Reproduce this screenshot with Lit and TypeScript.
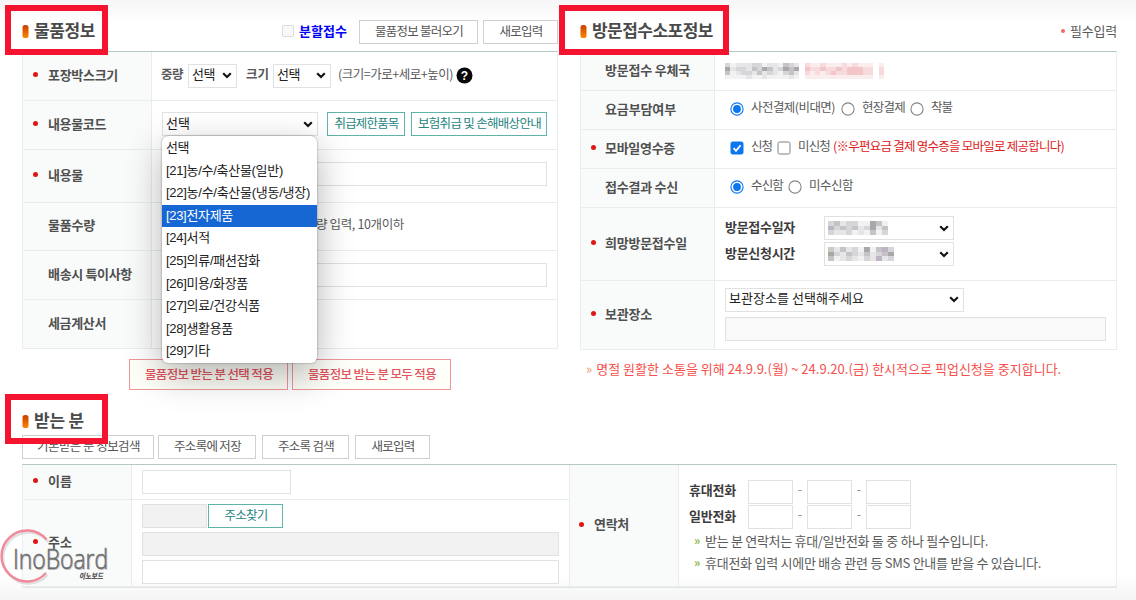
import { LitElement, html, css, svg } from "lit";
import { customElement, property } from "lit/decorators.js";

/** One line of text whose tracking is adjusted so that it fills `w` pixels. */
@customElement("fit-text")
class FitText extends LitElement {
  @property() text = "";
  @property({ type: Number }) w = 0;
  static styles = css`
    :host { display: block; flex: none; white-space: pre; }
    span { display: inline-block; }
  `;
  render() { return html`<span>${this.text}</span>`; }
  updated() {
    const s = this.renderRoot.querySelector("span") as HTMLElement;
    s.style.letterSpacing = "0px";
    const natural = s.getBoundingClientRect().width;
    s.style.letterSpacing = `${(this.w + 1 - natural) / this.text.length}px`;
    this.style.width = `${this.w}px`;
  }
}

const t = (text: string, w: number, cls = "") =>
  html`<fit-text class=${cls} .text=${text} .w=${w}></fit-text>`;

const chevron = html`<svg class="chev" width="10" height="7" viewBox="0 0 10 7"><path d="M1.2 1.2 L5 5 L8.8 1.2" fill="none" stroke="#111" stroke-width="2.1"/></svg>`;
const radio = (on: boolean) => html`<svg class="mark" width="14" height="14" viewBox="0 0 14 14">
  <circle cx="7" cy="7" r="6.1" fill="#fff" stroke=${on ? "#0b76ef" : "#858585"} stroke-width="1.1"/>
  ${on ? svg`<circle cx="7" cy="7" r="3.9" fill="#0b76ef"/>` : ""}</svg>`;
const check = (on: boolean) => html`<svg class="mark" width="14" height="14" viewBox="0 0 14 14">
  <rect x="1" y="1" width="12" height="12" rx="1.5" fill=${on ? "#0b76ef" : "#fff"} stroke=${on ? "#0b76ef" : "#808080"}/>
  ${on ? svg`<path d="M3.6 7.2 L6 9.8 L10.6 4.2" fill="none" stroke="#fff" stroke-width="1.8"/>` : ""}</svg>`;
const bullet = html`<svg class="bullet" width="7" height="13" viewBox="0 0 7 13">
  <defs><linearGradient id="o" x1="0" y1="0" x2="0" y2="1"><stop offset="0" stop-color="#c63f00"/><stop offset="1" stop-color="#ff8400"/></linearGradient></defs>
  <rect x="0.5" y="0" width="6" height="13" rx="2.6" fill="url(#o)"/></svg>`;

/** Pixelated strip: each string is a row of palette keys. */
const palette: Record<string, string> = {
  a: "#a9a7a8", b: "#c5c3c5", c: "#d6d5da", d: "#e6e5e8", e: "#f3f2f3",
  p: "#f2c5c8", q: "#f7dadc", r: "#fbeced", v: "#bdb3c4", g: "#c9ccc0",
};
const mosaic = (rows: string[], cw: number, ch: number) => html`<svg class="mosaic" width=${rows[0].length * cw} height=${rows.length * ch} shape-rendering="crispEdges">
  ${rows.map((r, y) => [...r].map((k, x) => palette[k]
    ? svg`<rect x=${x * cw} y=${y * ch} width=${cw} height=${ch} fill=${palette[k]}/>` : ""))}</svg>`;

const label = (text: string, w: number, req = false) =>
  html`<div class="th"><i class=${req ? "dot" : "dot off"}></i>${t(text, w)}</div>`;

const options: [string, number][] = [
  ["선택", 22], ["[21]농/수/축산물(일반)", 116], ["[22]농/수/축산물(냉동/냉장)", 143],
  ["[23]전자제품", 66], ["[24]서적", 43], ["[25]의류/패션잡화", 93], ["[26]미용/화장품", 81],
  ["[27]의료/건강식품", 93], ["[28]생활용품", 66], ["[29]기타", 43],
];

@customElement("app-root")
class AppRoot extends LitElement {
  static styles = css`
    :host {
      display: block; position: relative; width: 1136px; height: 600px; overflow: hidden;
      box-sizing: border-box; color: #5a5a5a; font: 12.5px/16px "Noto Sans CJK KR", sans-serif;
      background: linear-gradient(#f6f6f6, #fff 24px, #fff 574px, #f5f5f5);
    }
    * { box-sizing: border-box; }
    svg { display: block; flex: none; }
    .top { display: grid; grid-template-columns: 536px 537px; column-gap: 22px; padding-left: 22px; height: 394px; }
    .head { display: flex; align-items: center; height: 51px; padding-top: 12px; }
    .title { font-size: 17px; line-height: 22px; font-weight: 700; color: #4a4a4a; margin-left: 5px; margin-top: -3px; }
    .grow { flex: 1; }
    .table { border-top: 1.5px solid #b4c8c4; border-right: 1px solid #ebeeee; border-left: 1px solid #ebeeee; }
    .row { display: flex; border-bottom: 1px solid #e9ecec; }
    .th { flex: none; display: flex; align-items: center; background: #f9fbfb; border-right: 1px solid #e9ecec;
      font-weight: 700; font-size: 13px; color: #505050; padding: 0 0 3px 10px; }
    .left .th { width: 129px; }
    .right .th { width: 134px; }
    .right .th .dot { margin-right: 9px; }
    .td { flex: 1; display: flex; align-items: center; padding-left: 10px; }
    .right .td { padding-left: 10px; }
    .right .td.c { padding-left: 9px; }
    .h50 { height: 49px; } .h53 { height: 53px; } .h48 { height: 48px; }
    .h39 { height: 39px; } .h73 { height: 73px; } .h69 { height: 69px; }
    .h39 .td.c { padding-bottom: 3px; }
    .td.p2 { padding-bottom: 2px; }
    .td.p1 { padding-left: 9px; padding-bottom: 1px; }
    .h53 .td { padding-bottom: 5px; }
    .dot { width: 5px; height: 5px; border-radius: 50%; background: #e01616; margin: 0 10px 0 0; flex: none; }
    .dot.off { visibility: hidden; }
    .box { display: flex; align-items: center; height: 24px; border: 1px solid #e0e2e2; background: #fff; flex: none; }
    .sel { color: #222; font-size: 13px; padding-left: 3px; justify-content: space-between; }
    .sel fit-text { margin-bottom: 3px; }
    .chev { margin-right: 4px; }
    .btn { justify-content: center; border-color: #cfcfcf; font-size: 12.5px; color: #555; padding-bottom: 2px; }
    .teal { border: 1.5px solid #5fb3a8; color: #26857f; }
    .gray { background: #f2f2f2; } .pale { background: #f9f9f9; }
    .w49 { width: 49px; } .w58 { width: 58px; } .w156 { width: 156px; } .w77 { width: 78px; } .w136 { width: 136px; }
    .w385 { width: 385px; } .w120 { width: 119px; } .w75 { width: 75px; } .w130 { width: 130px; } .w239 { width: 239px; }
    .w381 { width: 381px; } .w133 { width: 132px; } .w98 { width: 98px; } .w88 { width: 87px; } .w149 { width: 149px; }
    .w65 { width: 65px; } .w417 { width: 417px; } .w45 { width: 45px; }
    .m2 { margin-left: 1px; } .m4 { margin-left: 4px; } .m5 { margin-left: 5px; } .m6 { margin-left: 6px; }
    .m7 { margin-left: 7px; } .m9 { margin-left: 9px; } .m10 { margin-left: 10px; } .m13 { margin-left: 13px; } .m30 { margin-left: 30px; }
    .b { font-weight: 700; } .dark { font-weight: 700; color: #3c3c3c; font-size: 13px; }
    .up { margin-bottom: 3px; }
    .tel .t0 { margin-bottom: 5px; } .tel .t1 { margin-bottom: 2px; }
    .blue { color: #0000f5; font-weight: 700; font-size: 13px; margin-bottom: 2px; }
    .red { color: #dc2222; }
    .minor { width: 12px; height: 12px; border: 1px solid #dcdcdc; border-radius: 2px; background: #f8f8f8; margin-right: 5px; margin-bottom: 1px; }
    .help { margin-left: 4px; }
    .hlp { font: 700 12px "Liberation Sans", sans-serif; }
    .qty { margin-left: 154px; margin-bottom: 5px; }
    .stack { flex-direction: column; align-items: flex-start; justify-content: center; }
    .line { display: flex; align-items: center; }
    .dates { gap: 2px; padding-bottom: 6px; }
    .dates .line { height: 24px; }
    .place { gap: 5px; padding-bottom: 2px; }
    .apply { display: flex; gap: 4px; padding: 10px 0 0 107px; }
    .apply .box { width: 159px; height: 31px; border: 1.5px solid #f0959a; background: #fffffa; color: #e25560; font-weight: 500; }
    .notice { display: flex; align-items: center; padding: 11px 0 0 6px; color: #f5504c; font-size: 13px; }
    .q { color: #e8a070; margin-right: 4px; font-size: 13px; }
    .reqd { font-size: 13px; margin: 0 1px 2px 0; }
    .reqdot { width: 4px; height: 4px; border-radius: 50%; background: #f26a60; margin-right: 5px; margin-bottom: 1px; }
    .recv { padding-left: 22px; width: 1117px; }
    .rhead { display: flex; align-items: center; height: 41px; padding-top: 13px; }
    .bar { display: flex; height: 29px; }
    .rt { display: grid; grid-template-columns: 109px 438px 109px 1fr; grid-template-rows: 35px 87px; height: 124px; border-bottom: 1px solid #e3e6e6; }
    .rt .th { border-bottom: 1px solid #e9ecec; }
    .rt .th.span { padding-left: 9px; }
    .rt .td { border-bottom: 1px solid #e9ecec; border-right: 1px solid #e9ecec; }
    .rt .td.tel { border-right: 0; }
    .span { grid-row: span 2; }
    .addr { gap: 4px; padding-top: 1px; }
    .tel .line { height: 25px; }
    .tel .dash { width: 14px; text-align: center; color: #888; line-height: 16px; margin-top: -7px; }
    .tel { padding-top: 2px; }
    .hint { display: flex; align-items: center; height: 22px; padding-left: 5px; font-size: 13px; }
    .gq { color: #8db53c; width: 11px; font-weight: 700; font-size: 12px; margin-bottom: 2px; }
    .frame { position: absolute; width: 103px; height: 50px; border: 6px solid #f5142f; }
    .f1 { left: 5px; top: 5px; } .f2 { left: 559px; top: 5px; width: 170px; } .f3 { left: 5px; top: 394px; }
    .menu { position: absolute; left: 162px; top: 136px; width: 155px; height: 227px; border-radius: 6px; background: #fff;
      box-shadow: 0 0 2px rgba(0,0,0,.45), 0 12px 36px rgba(0,0,0,.3); padding-top: 1px;
      color: #222; font: 13px/22.6px "Liberation Sans", "Noto Sans CJK KR", sans-serif; }
    .opt { height: 22.6px; padding-left: 4px; }
    .opt.on { background: #1666d4; color: #fff; }
    .logo { position: absolute; left: 0; top: 526px; }
    .lg { font: 300 28px "Open Sans", sans-serif; }
    .ls { font: italic 900 8px "Noto Sans CJK KR", sans-serif; }
    .mosaic { filter: blur(.6px); }
  `;

  render() {
    return html`
      <div class="top">
        <section class="left">
          <div class="head">${bullet}${t("물품정보", 60, "title")}
            <div class="grow"></div><i class="minor"></i>${t("분할접수", 47, "blue")}
            <div class="box btn w120 m13">${t("물품정보 불러오기", 87)}</div>
            <div class="box btn w75 m5">${t("새로입력", 42)}</div></div>
          <div class="table">
            <div class="row h50">${label("포장박스크기", 69, true)}
              <div class="td p1">${t("중량", 21, "b up")}<div class="box sel w49 m6">${t("선택", 22)}${chevron}</div>
                <span class="m9">${t("크기", 22, "b up")}</span><div class="box sel w58 m5">${t("선택", 22)}${chevron}</div>
                <span class="m7">${t("(크기=가로+세로+높이)", 114, "up")}</span>
                <svg class="help" width="17" height="17" viewBox="0 0 17 17"><circle cx="8.5" cy="8.5" r="8" fill="#080808"/><text class="hlp" x="8.5" y="12.8" text-anchor="middle" fill="#fff">?</text></svg></div></div>
            <div class="row h50">${label("내용물코드", 57, true)}
              <div class="td p2"><div class="box sel w156">${t("선택", 23)}${chevron}</div>
                <div class="box btn teal w77 m9">${t("취급제한품목", 63)}</div>
                <div class="box btn teal w136 m6">${t("보험취급 및 손해배상안내", 122)}</div></div></div>
            <div class="row h53">${label("내용물", 34, true)}<div class="td"><div class="box w385"></div></div></div>
            <div class="row h48">${label("물품수량", 46)}<div class="td">${t("량 입력, 10개이하", 87, "qty")}</div></div>
            <div class="row h50">${label("배송시 특이사항", 83)}<div class="td"><div class="box w385"></div></div></div>
            <div class="row h50">${label("세금계산서", 57)}<div class="td"></div></div>
          </div>
          <div class="apply"><div class="box btn">${t("물품정보 받는 분 선택 적용", 127)}</div>
            <div class="box btn">${t("물품정보 받는 분 모두 적용", 127)}</div></div>
        </section>

        <section class="right">
          <div class="head">${bullet}${t("방문접수소포정보", 120, "title")}
            <div class="grow"></div><i class="reqdot"></i>${t("필수입력", 46, "reqd")}</div>
          <div class="table">
            <div class="row h39">${label("방문접수 우체국", 84)}<div class="td">${mosaic(
              ["cedddcceddebcd qrrqrrrqrqrrr r", "adccdbcabdcaba pqqpqqpqpppqq q", "bedccdbdcdecbd qrqrqpqqpppqq q", "eeeedeedeeeede rrrrrrrrrrrrr r"], 5.3, 4)}</div></div>
            <div class="row h39">${label("요금부담여부", 70)}<div class="td c"><span class="m6">${radio(true)}</span>
              <span class="m7">${t("사전결제(비대면)", 83, "up")}</span><span class="m7">${radio(false)}</span>
              <span class="m7">${t("현장결제", 42, "up")}</span><span class="m6">${radio(false)}</span><span class="m7">${t("착불", 20, "up")}</span></div></div>
            <div class="row h39">${label("모바일영수증", 69, true)}<div class="td c"><span class="m6">${check(true)}</span>
              <span class="m7">${t("신청", 20, "up")}</span><span class="m6">${check(false)}</span>
              <span class="m7">${t("미신청", 31, "up")}</span><span class="m4">${t("(※우편요금 결제 영수증을 모바일로 제공합니다)", 230, "up red")}</span></div></div>
            <div class="row h39">${label("접수결과 수신", 72)}<div class="td c"><span class="m6">${radio(true)}</span>
              <span class="m7">${t("수신함", 31, "up")}</span><span class="m6">${radio(false)}</span><span class="m7">${t("미수신함", 43, "up")}</span></div></div>
            <div class="row h73">${label("희망방문접수일", 81, true)}<div class="td stack dates">
              <div class="line">${t("방문접수일자", 69, "dark up")}<span class="m30"><div class="box sel w130">${mosaic(["cbdcceeabe", "vcbcbdcadb", "cddcedebec"], 6, 4.5)}${chevron}</div></span></div>
              <div class="line">${t("방문신청시간", 69, "dark up")}<span class="m30"><div class="box sel w130">${mosaic(["gdbdceaebvc", "acdbcdbdcba", "bedcdecdvdc"], 6, 4.5)}${chevron}</div></span></div></div></div>
            <div class="row h69">${label("보관장소", 46, true)}<div class="td stack place">
              <div class="box sel w239">${t("보관장소를 선택해주세요", 134)}${chevron}</div><div class="box pale w381"></div></div></div>
          </div>
          <div class="notice"><span class="q">»</span>${t("명절 원활한 소통을 위해 24.9.9.(월) ~ 24.9.20.(금) 한시적으로 픽업신청을 중지합니다.", 464)}</div>
        </section>
      </div>

      <section class="recv">
        <div class="rhead">${bullet}${t("받는 분", 49, "title")}</div>
        <div class="bar"><div class="box btn w133">${t("기본받은 분 정보검색", 102)}</div>
          <div class="box btn w98 m4">${t("주소록에 저장", 66)}</div>
          <div class="box btn w88 m6">${t("주소록 검색", 55)}</div>
          <div class="box btn w75 m6">${t("새로입력", 42)}</div></div>
        <div class="table rt">
          ${label("이름", 23, true)}<div class="td"><div class="box w149"></div></div>
          <div class="th span"><i class="dot"></i>${t("연락처", 34)}</div>
          <div class="td span stack tel">
            ${["휴대전화", "일반전화"].map((n, i) => html`<div class="line">${t(n, 46, i ? "dark t1" : "dark t0")}<span class="m13"><div class="box w45"></div></span>
              <div class="dash">-</div><div class="box w45"></div><div class="dash">-</div><div class="box w45"></div></div>`)}
            <div class="hint"><span class="gq">»</span>${t("받는 분 연락처는 휴대/일반전화 둘 중 하나 필수입니다.", 282)}</div>
            <div class="hint"><span class="gq">»</span>${t("휴대전화 입력 시에만 배송 관련 등 SMS 안내를 받을 수 있습니다.", 335)}</div>
          </div>
          ${label("주소", 23, true)}<div class="td stack addr">
            <div class="line"><div class="box gray w65"></div><div class="box btn teal w75 m2">${t("주소찾기", 42)}</div></div>
            <div class="box gray w417"></div><div class="box w417"></div></div>
        </div>
      </section>

      <div class="menu">${options.map(([o, w], i) => html`<div class=${i === 3 ? "opt on" : "opt"}>${t(o, w)}</div>`)}</div>
      <svg class="logo" width="112" height="62" viewBox="0 0 112 62">
        <path d="M47.5 14.5 A25.5 25.5 0 1 0 46.5 47.5" fill="none" stroke="#ccc" stroke-opacity=".6" stroke-width="2.5" transform="translate(1 1.5)"/>
        <path d="M46.5 13.5 A25.5 25.5 0 1 0 46 47" fill="none" stroke="#f2899a" stroke-width="2.4"/>
        <text class="lg" x="14" y="43.5" fill="#ccc" aria-hidden="true" textLength="95" lengthAdjust="spacingAndGlyphs">InoBoard</text>
        <text class="lg" x="13" y="42.5" fill="#707070" stroke="#707070" stroke-width=".6" textLength="95" lengthAdjust="spacingAndGlyphs">InoBoard</text>
        <text class="ls" x="79" y="52.5" fill="#555" textLength="24" lengthAdjust="spacingAndGlyphs">이노보드</text>
      </svg>
      <div class="frame f1"></div><div class="frame f2"></div><div class="frame f3"></div>`;
  }
}
